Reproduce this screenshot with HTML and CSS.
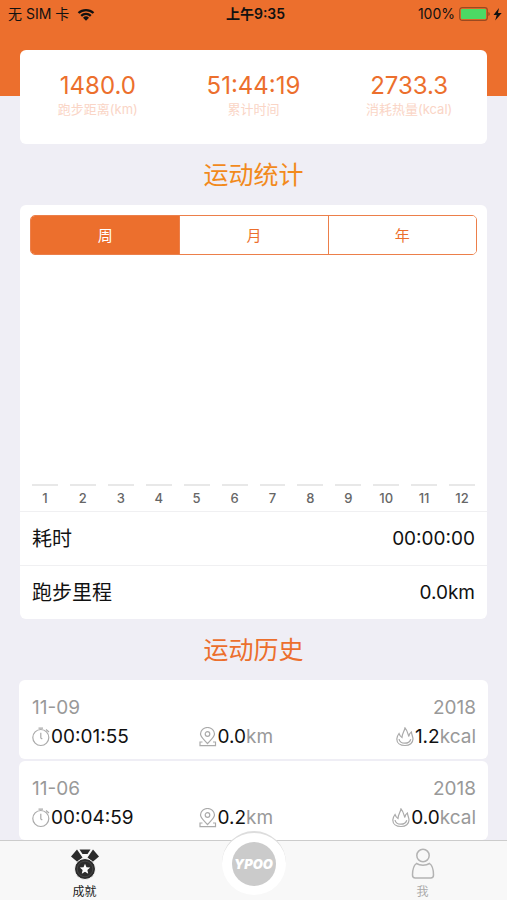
FILE: index.html
```html
<!DOCTYPE html>
<html lang="zh-CN">
<head>
<meta charset="utf-8">
<meta name="viewport" content="width=device-width, initial-scale=1">
<title>成就</title>
<link rel="stylesheet" href="styles.css">
</head>
<body>
<svg class="defs" aria-hidden="true">
  <symbol id="clock" viewBox="0 0 18 20">
    <circle cx="8.800" cy="10.500" r="8"/><path d="M8.800 5.800v5.200l1.500 1M6.500 1.200h4.500M14 2.500l3 2.500"/>
  </symbol>
  <symbol id="pin" viewBox="0 0 18 20">
    <path d="M8.500 16.500C5 12.500 1.500 10 1.500 7a7 6.500 0 0 1 14 0C15.500 10 12 12.500 8.500 16.500zM3.500 15H1v3.700h15.500V15h-2.500"/><circle cx="8.500" cy="7" r="2.300"/>
  </symbol>
  <symbol id="flame" viewBox="0 0 18 20">
    <path d="M3 6.500C1.500 8.500.8 10 .8 12c0 4 3.400 6.500 8.200 6.500s8-2.700 8-6.500c0-2.300-1.300-4-1.600-7-1.600 1-2.300 2.500-2.600 4.500C12 7 11.500 3.500 9 .8 8.500 4 6.200 6 6 10.500 4.500 9.700 3.700 8.500 3 6.500z"/><path d="M3 12c.5 2.800 2.800 4.200 5.800 4.200s5.200-1.500 6-4"/>
  </symbol>
</svg>
<div class="app">
  <main class="content">
    <header class="hero">
      <div class="status">
        <span class="carrier">无 SIM 卡
          <svg class="wifi" viewBox="0 0 18 13" aria-hidden="true"><path d="M1.500 5a11 11 0 0 1 15 0M4.200 7.800a7 7 0 0 1 9.600 0" fill="none" stroke="currentColor" stroke-width="2.300"/><path d="M9 12.800L6 9.800a4.300 4.300 0 0 1 6 0z" fill="currentColor"/></svg>
        </span>
        <span class="time">上午9:35</span>
        <span class="power">100%
          <svg class="battery" viewBox="0 0 44 14" aria-hidden="true"><rect x=".7" y=".7" width="27.600" height="12.600" rx="2.500" fill="none" stroke="#9a4a20" stroke-width="1.200"/><rect x="2" y="2" width="25" height="10" rx="1" fill="#4cd964"/><path d="M29.500 5v4c1.500-.5 1.500-3.500 0-4z" fill="#7c3c1c"/><path d="M40 1L34.500 8h3.200l-1.500 5.500 6.500-7.500h-3.700z" fill="#111"/></svg>
        </span>
      </div>
    </header>

    <section class="card totals">
      <div class="total"><strong>1480.0</strong><span>跑步距离(km)</span></div>
      <div class="total"><strong>51:44:19</strong><span>累计时间</span></div>
      <div class="total"><strong>2733.3</strong><span>消耗热量(kcal)</span></div>
    </section>

    <h2 class="title amber">运动统计</h2>
    <section class="card stats">
      <div class="segments">
        <button type="button" class="active">周</button>
        <button type="button">月</button>
        <button type="button">年</button>
      </div>
      <ol class="chart">
        <li>1</li><li>2</li><li>3</li><li>4</li><li>5</li><li>6</li>
        <li>7</li><li>8</li><li>9</li><li>10</li><li>11</li><li>12</li>
      </ol>
      <div class="row"><span class="label">耗时</span><span>00:00:00</span></div>
      <div class="row"><span class="label">跑步里程</span><span>0.0km</span></div>
    </section>

    <h2 class="title">运动历史</h2>
    <section class="history">
      <article class="run">
        <div class="date"><span>11-09</span><span>2018</span></div>
        <div class="metrics">
          <span class="metric"><svg><use href="#clock"/></svg><b>00:01:55</b></span>
          <span class="metric"><svg><use href="#pin"/></svg><b>0.0</b>km</span>
          <span class="metric end"><svg><use href="#flame"/></svg><b>1.2</b>kcal</span>
        </div>
      </article>
      <article class="run">
        <div class="date"><span>11-06</span><span>2018</span></div>
        <div class="metrics">
          <span class="metric"><svg><use href="#clock"/></svg><b>00:04:59</b></span>
          <span class="metric"><svg><use href="#pin"/></svg><b>0.2</b>km</span>
          <span class="metric end"><svg><use href="#flame"/></svg><b>0.0</b>kcal</span>
        </div>
      </article>
    </section>
  </main>

  <nav class="tabs">
    <a href="#achievements" class="tab current">
      <svg viewBox="0 0 30 32" aria-hidden="true">
        <path d="M7 1.500L1 8.500l6.500 5.500 5-4.500zM23 1.500l6 7-6.500 5.500-5-4.500zM9.500 1.500h11l-3 4.500h-5z" fill="#2c2c2c"/>
        <circle cx="15" cy="21" r="10.500" fill="#2c2c2c" stroke="#f8f8f8"/>
        <circle cx="15" cy="21" r="7.800" fill="none" stroke="#555" stroke-width=".6"/>
        <path d="M15 15.800l1.500 3.400 3.700.4-2.800 2.500.8 3.600-3.200-1.900-3.200 1.900.8-3.600-2.800-2.500 3.700-.4z" fill="#fff"/>
      </svg>
      <span>成就</span>
    </a>
    <a href="#run" class="start"><span class="logo">YPOO</span></a>
    <a href="#me" class="tab">
      <svg viewBox="0 0 30 32" aria-hidden="true" fill="none" stroke="#b3b3b3" stroke-width="1.500">
        <circle cx="15" cy="7.500" r="6.200"/>
        <path d="M8.500 15.500C5.500 17.500 4.500 21.500 4.500 27c0 2 .8 3 2.800 3h15.400c2 0 2.800-1 2.800-3 0-5.500-1-9.500-4-11.500-3.500 2.200-9.500 2.200-13 0z"/>
      </svg>
      <span>我</span>
    </a>
  </nav>
</div>
</body>
</html>
```
FILE: styles.css
```css
* { box-sizing: border-box; }

body {
  margin: 0;
  background: #efeef5;
  color: #111;
  font-family: Inter, "Noto Sans CJK SC", sans-serif;
}

.defs { position: absolute; width: 0; height: 0; }

.app {
  display: flex;
  flex-direction: column;
  height: 100vh;
}

.content {
  flex: 1;
  min-height: 0;
  overflow-y: auto;
  scrollbar-width: none;
}

.hero {
  height: 96px;
  background: #ec6f2d;
}

.status {
  display: grid;
  grid-template-columns: 1fr auto 1fr;
  align-items: center;
  height: 28px;
  padding: 0 4px 0 8px;
  font-size: 14px;
  line-height: 20px;
}

.carrier, .power { display: flex; align-items: center; gap: 6px; }
.carrier { gap: 8px; }
.power { justify-content: flex-end; gap: 4px; }
.time { font-weight: 600; }
.wifi { width: 18px; height: 13px; }
.battery { width: 44px; height: 14px; }

.card {
  margin: 0 20px;
  border-radius: 6px;
  background: #fff;
}

.totals {
  display: grid;
  grid-template-columns: repeat(3, 1fr);
  height: 94px;
  margin-top: -46px;
  padding-top: 22px;
  text-align: center;
}

.total strong, .total span { display: block; }
.total strong {
  color: #ec6f2d;
  font-size: 24px;
  font-weight: 400;
  line-height: 28px;
}
.total span {
  color: #fad5c6;
  font-size: 13px;
  line-height: 18px;
}

.title {
  margin: 0;
  padding-top: 1px;
  color: #ec6f2d;
  font-size: 25px;
  font-weight: 400;
  line-height: 60px;
  text-align: center;
}
.title.amber { color: #f28a1c; }

.stats { padding-top: 10px; }

.segments {
  display: grid;
  grid-template-columns: repeat(3, 1fr);
  height: 40px;
  margin: 0 10px;
  overflow: hidden;
  border: 1px solid #ec7f4a;
  border-radius: 5px;
}
.segments button {
  padding: 0 0 2px;
  border: 0;
  border-left: 1px solid #ec7f4a;
  background: #fff;
  color: #ec6f2d;
  font: inherit;
  font-size: 15px;
}
.segments .active {
  border-left: 0;
  background: #ec6f2d;
  color: #fff;
}

.chart {
  display: grid;
  grid-template-columns: repeat(12, 1fr);
  align-items: end;
  height: 256px;
  margin: 0;
  padding: 0 6px 3px;
  list-style: none;
  color: #666;
  font-size: 13px;
  font-weight: 500;
  line-height: 20px;
  text-align: center;
}
.chart li::before {
  display: block;
  height: 2px;
  margin: 0 6px 2px;
  background: #e8e8e8;
  content: "";
}

.row {
  display: flex;
  align-items: center;
  justify-content: space-between;
  height: 54px;
  padding: 0 12px;
  border-top: 1px solid #f0f0f2;
  font-size: 19px;
  line-height: 28px;
}
.label { font-size: 20px; }

.history {
  display: grid;
  gap: 2px;
  margin: 0 19px;
}
.run {
  height: 79px;
  padding: 13px 12px 12px 13px;
  border-radius: 6px;
  background: #fff;
  color: #999;
  font-size: 19px;
  line-height: 29px;
}
.date { display: flex; justify-content: space-between; }
.metrics { display: grid; grid-template-columns: 3fr 3fr 2fr; }
.metric { display: flex; align-items: center; }
.metric b { color: #111; font-weight: 400; }
.metric svg {
  width: 18px;
  height: 20px;
  margin-right: 1px;
  fill: none;
  stroke: #aaa;
  stroke-width: 1.2;
}
.end { justify-content: flex-end; }

.tabs {
  display: grid;
  grid-template-columns: repeat(3, 1fr);
  height: 60px;
  border-top: 1px solid #ccc;
  background: #f8f8f8;
}
.tab {
  display: flex;
  flex-direction: column;
  align-items: center;
  padding-top: 7px;
  color: #aaa;
  font-size: 12px;
  line-height: 24px;
  text-decoration: none;
}
.tab.current { color: #222; }
.tab svg { width: 30px; height: 32px; }

.start {
  display: grid;
  place-items: center;
  justify-self: center;
  width: 64px;
  height: 64px;
  margin-top: -10px;
  border-top: 2px solid #ddd;
  border-radius: 50%;
  background: #fff;
  text-decoration: none;
  z-index: 1;
}
.logo {
  display: grid;
  place-items: center;
  width: 44px;
  height: 44px;
  border-radius: 50%;
  background: #cbcbcb;
  color: #fff;
  font-size: 13px;
  font-style: italic;
  font-weight: 900;
}
```
